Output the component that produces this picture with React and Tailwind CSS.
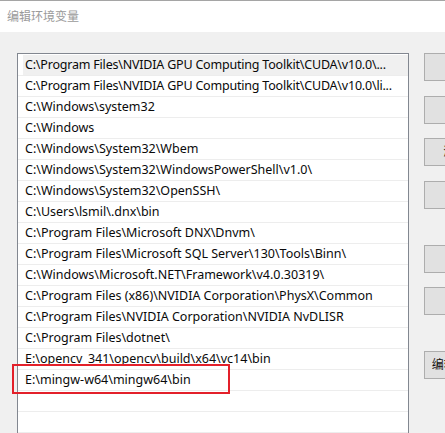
const paths = [
  'C:\\Program Files\\NVIDIA GPU Computing Toolkit\\CUDA\\v10.0\\...',
  'C:\\Program Files\\NVIDIA GPU Computing Toolkit\\CUDA\\v10.0\\li...',
  'C:\\Windows\\system32',
  'C:\\Windows',
  'C:\\Windows\\System32\\Wbem',
  'C:\\Windows\\System32\\WindowsPowerShell\\v1.0\\',
  'C:\\Windows\\System32\\OpenSSH\\',
  'C:\\Users\\lsmil\\.dnx\\bin',
  'C:\\Program Files\\Microsoft DNX\\Dnvm\\',
  'C:\\Program Files\\Microsoft SQL Server\\130\\Tools\\Binn\\',
  'C:\\Windows\\Microsoft.NET\\Framework\\v4.0.30319\\',
  'C:\\Program Files (x86)\\NVIDIA Corporation\\PhysX\\Common',
  'C:\\Program Files\\NVIDIA Corporation\\NVIDIA NvDLISR',
  'C:\\Program Files\\dotnet\\',
  'E:\\opencv_341\\opencv\\build\\x64\\vc14\\bin',
  'E:\\mingw-w64\\mingw64\\bin',
  '',
  '',
];

const buttons = [
  { label: '新建(N)', gap: 'mt-0' },
  { label: '编辑(E)', gap: 'mt-[15px]' },
  { label: '浏览(B)...', gap: 'mt-[14px]' },
  { label: '删除(D)', gap: 'mt-[15px]' },
  { label: '上移(U)', gap: 'mt-[36px]' },
  { label: '下移(O)', gap: 'mt-[14px]' },
  { label: '编辑文本(T)...', gap: 'mt-[36px]' },
];

export default function App() {
  return (
    <div
      className="w-[445px] h-[433px] overflow-hidden bg-[#f0f0f0] flex flex-col"
      style={{ fontFamily: '"Noto Sans", "Noto Sans CJK SC", sans-serif' }}
    >
      {/* title bar */}
      <div className="h-[32px] shrink-0 bg-white border-t border-[#a5a5a5] flex items-center pl-[7px]">
        <span className="text-[12px] text-[#9a9a9a]">编辑环境变量</span>
      </div>

      <div className="flex flex-1 pt-[21px] pl-[17px]">
        {/* path list */}
        <div className="relative w-[392px] shrink-0 bg-white border-l border-t border-r border-[#828790] pt-px">
          {paths.map((p, i) => (
            <div
              key={i}
              className="h-[21px] border-b border-[#ededed] flex items-center"
            >
              <div
                className={
                  'h-full flex-1 ml-[5px] pl-[2px] flex items-center text-[12.5px] text-[#0a0a0a] whitespace-nowrap overflow-hidden ' +
                  (i === 0 ? 'bg-[#f0f0f0] ' : '') +
                  (i < 2 ? 'tracking-[-0.2px]' : '')
                }
              >
                {p}
              </div>
            </div>
          ))}

          {/* annotation box */}
          <div className="absolute left-[-6px] top-[310px] w-[218px] h-[30px] border-[2px] border-[#e3202a]" />
        </div>

        {/* buttons */}
        <div className="ml-[15px] flex flex-col">
          {buttons.map((b) => (
            <div
              key={b.label}
              className={
                b.gap +
                ' w-[87px] h-[28px] shrink-0 bg-[#e1e1e1] border border-[#adadad] flex items-center justify-center text-[12px] text-[#111] whitespace-nowrap'
              }
            >
              {b.label}
            </div>
          ))}
        </div>
      </div>
    </div>
  );
}
